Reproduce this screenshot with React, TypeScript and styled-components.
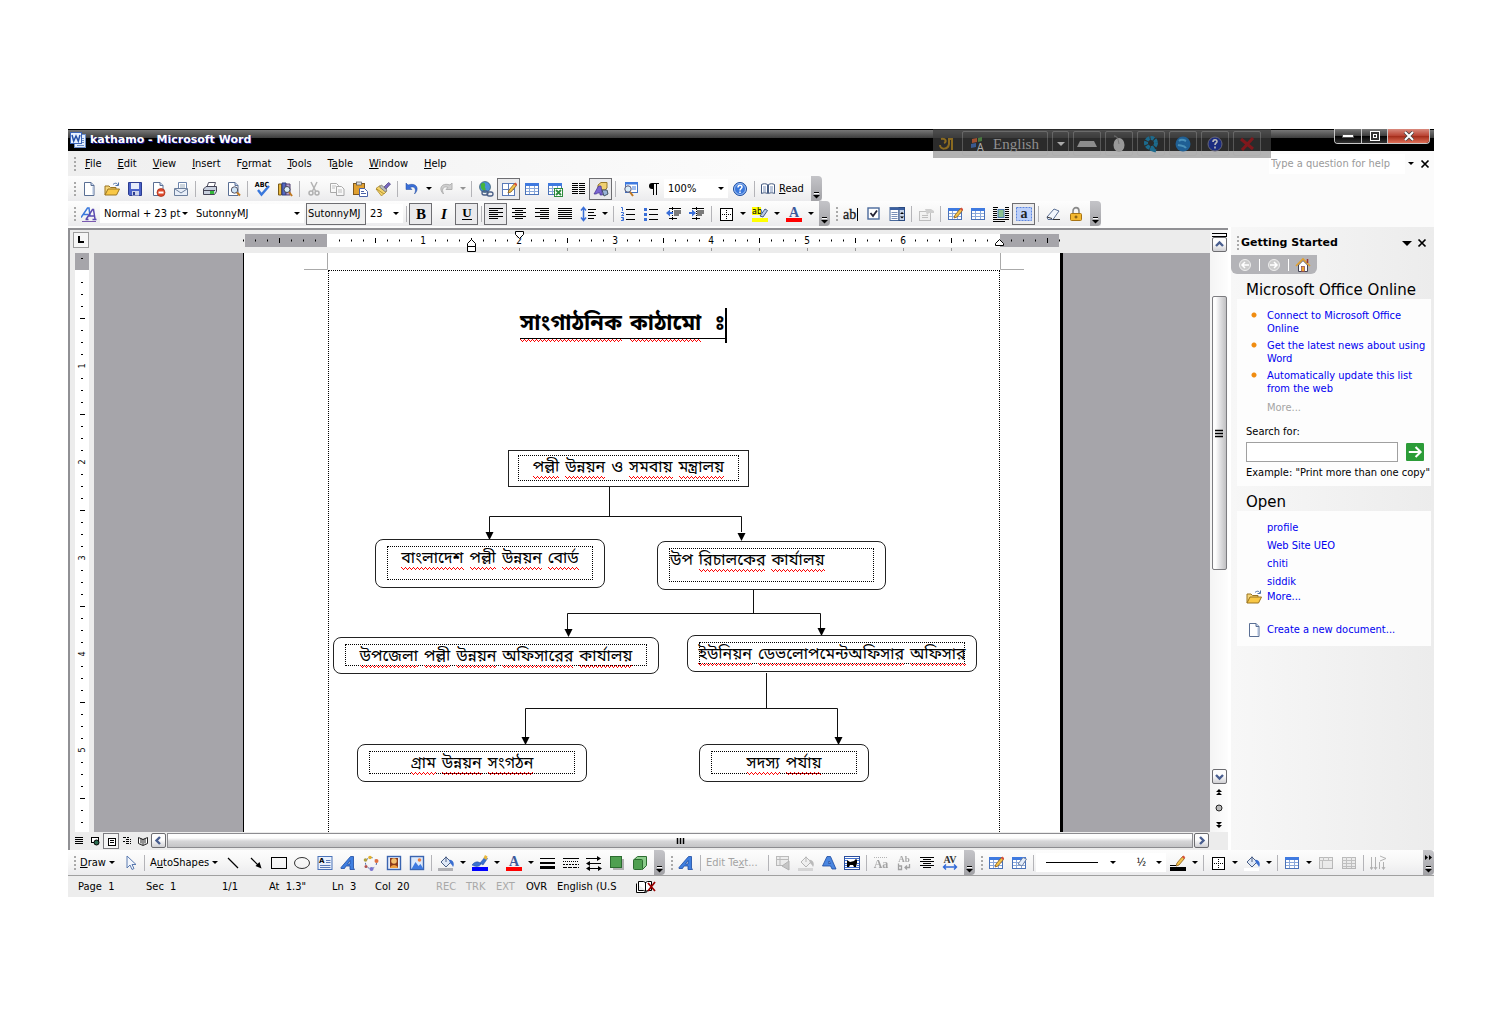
import React from "react";
import styled, { createGlobalStyle, css } from "styled-components";

const ui = `"DejaVu Sans Condensed", "DejaVu Sans", "Liberation Sans", sans-serif`;
const wide = `"DejaVu Sans", "Liberation Sans", sans-serif`;
const bangla = `"Noto Sans Bengali", "Noto Serif Bengali", "Lohit Bengali", "FreeSerif", "FreeSans", serif`;

const GlobalStyle = createGlobalStyle`
  * { box-sizing: border-box; }
  body { margin: 0; background: #fff; font: 11px/14px ${ui}; color: #000; }
  button, input, select { font: inherit; color: inherit; margin: 0; padding: 0; border: 0; background: none; }
  svg { display: block; flex: none; }
`;

/* ---------- frame ---------- */

const Page = styled.div`
  min-height: 100vh;
  padding: 129px 66px 127px 68px;
  display: flex;
`;
const Window = styled.div`
  flex: 1;
  min-width: 0;
  display: flex;
  flex-direction: column;
  background: #fbfbfb;
`;
const TitleBar = styled.header`
  position: relative;
  height: 22px;
  display: flex;
  align-items: center;
  padding-left: 2px;
  gap: 4px;
  background: linear-gradient(#000 0, #000 1px, #777 1px, #3c3c3c 9px, #000 9px);
  color: #fff;
`;
const Title = styled.h1`
  margin: 0;
  font: bold 11px/14px ${wide};
  text-shadow: 1px 1px 0 #1c1c9c;
`;
const WinButtons = styled.div`
  align-self: flex-start;
  display: flex;
  margin: 0 4px 0 auto;
  border: 1px solid #c8c8c8;
  border-top: 0;
  border-radius: 0 0 4px 4px;
  overflow: hidden;
`;
const WinButton = styled.button<{ $close?: boolean }>`
  width: ${(p) => (p.$close ? 42 : 26)}px;
  height: 14px;
  display: grid;
  place-items: center;
  background: ${(p) =>
    p.$close ? "linear-gradient(#d98a7e, #b8402f 50%, #a12a18 50%, #e07058)" : "linear-gradient(#777, #3c3c3c 50%, #000 50%, #333)"};
  & + & { border-left: 1px solid #c8c8c8; }
`;
const LangBar = styled.div`
  position: absolute;
  z-index: 2;
  top: 0;
  right: 163px;
  width: 338px;
  height: 29px;
  padding: 2px 3px;
  display: flex;
  align-items: stretch;
  gap: 4px;
  background: rgba(120, 120, 120, 0.55);
  box-shadow: inset 0 22px 0 rgba(0, 0, 0, 0.35);
`;
const LangButton = styled.button<{ $w: number; $bare?: boolean }>`
  width: ${(p) => p.$w}px;
  display: flex;
  align-items: center;
  justify-content: center;
  gap: 6px;
  border: 1px solid ${(p) => (p.$bare ? "transparent" : "rgba(170,170,170,0.35)")};
  border-radius: 2px;
  color: #8f8f8f;
  font: 15px/16px "Liberation Serif", serif;
`;

/* ---------- menu and tool bars ---------- */

const MenuBar = styled.nav`
  height: 25px;
  display: flex;
  align-items: center;
  background: linear-gradient(90deg, #efefef, #fbfbfb 50%);
`;
const MenuItem = styled.button`
  padding: 0 8px;
  height: 20px;
  white-space: nowrap;
`;
const HelpBox = styled.input`
  margin-left: auto;
  width: 136px;
  height: 20px;
  padding-left: 2px;
  background: #fff;
  &::placeholder { color: #9a9a9a; opacity: 1; }
`;
const MenuClose = styled.button`
  width: 18px;
  height: 20px;
  display: grid;
  place-items: center;
`;
const BarRow = styled.div<{ $h: number; $line?: boolean }>`
  display: flex;
  height: ${(p) => p.$h}px;
  background: #fbfbfb;
  border-bottom: ${(p) => (p.$line ? "1px solid #a0a0a0" : 0)};
`;
const Bar = styled.div<{ $fill?: boolean }>`
  display: flex;
  align-items: center;
  height: 25px;
  flex: ${(p) => (p.$fill ? "1" : "none")};
  background: linear-gradient(#fdfdfd, #f6f6f6 50%, #ebebed);
`;
const Grip = styled.span`
  flex: none;
  width: 9px;
  height: 14px;
  background: radial-gradient(circle at 1px 1px, #a9a9a9 1px, transparent 1px) 6px 0 / 3px 4px repeat-y;
`;
const Tool = styled.button<{ $on?: boolean; $off?: boolean }>`
  flex: none;
  width: 23px;
  height: 22px;
  display: grid;
  place-items: center;
  ${(p) => p.$on && css`border: 1px solid #6e6e72; background: #eaeaec;`}
  ${(p) => p.$off && css`filter: grayscale(1); opacity: 0.42;`}
`;
const WideTool = styled.button<{ $w: number; $off?: boolean }>`
  flex: none;
  width: ${(p) => p.$w}px;
  height: 22px;
  display: flex;
  align-items: center;
  gap: 3px;
  padding-left: 3px;
  white-space: nowrap;
  color: ${(p) => (p.$off ? "#a3a3a3" : "#000")};
`;
const Drop = styled.button<{ $off?: boolean }>`
  flex: none;
  width: 11px;
  height: 22px;
  display: grid;
  place-items: center;
  opacity: ${(p) => (p.$off ? 0.4 : 1)};
`;
const Sep = styled.span`
  flex: none;
  width: 6px;
  height: 16px;
  background: linear-gradient(#b4b4b8, #b4b4b8) 3px 0 / 1px 100% no-repeat;
`;
const Cap = styled.button<{ $end?: boolean }>`
  flex: none;
  width: 11px;
  height: 25px;
  margin-left: ${(p) => (p.$end ? "auto" : "3px")};
  border-radius: 0 4px 4px 0;
  display: flex;
  flex-direction: column;
  justify-content: ${(p) => (p.$end ? "space-between" : "flex-end")};
  align-items: center;
  padding: 5px 0 2px;
  background: linear-gradient(#c4c4c8, #a2a2a6);
`;
const ComboBox = styled.label<{ $w: number }>`
  flex: none;
  width: ${(p) => p.$w}px;
  height: 19px;
  display: flex;
  align-items: center;
  padding: 0 4px;
  background: #fff;
`;
const Select = styled.select`
  appearance: none;
  flex: 1;
  min-width: 0;
  outline: 0;
`;
const Tip = styled.output`
  flex: none;
  width: 60px;
  height: 22px;
  margin-left: 2px;
  border: 1px solid #6e6e72;
  background: #f0f0f0;
  padding-left: 1px;
  line-height: 20px;
  white-space: nowrap;
`;

/* ---------- document ---------- */

const Main = styled.main`
  flex: 1;
  display: flex;
  min-height: 0;
`;
const DocView = styled.section`
  flex: 1;
  min-width: 0;
  display: flex;
  flex-direction: column;
  margin-top: 1px;
  border: solid #909094;
  border-width: 2px 0 0 2px;
  background: #ececec;
`;
const DocRow = styled.div`
  flex: 1;
  min-height: 0;
  display: flex;
`;
const DocColumn = styled.div`
  flex: 1;
  min-width: 0;
  display: flex;
  flex-direction: column;
`;
const RulerRow = styled.div`
  flex: none;
  height: 23px;
  display: flex;
`;
const TabBox = styled.button`
  flex: none;
  margin: 2px 5px 0 3px;
  width: 16px;
  height: 16px;
  border: 1px solid #9c9c9c;
  background: #f6f6f6;
  display: grid;
  place-items: center;
`;
const RulerTrack = styled.div`
  flex: 1;
  min-width: 0;
  display: flex;
  justify-content: center;
`;
const SheetRow = styled.div`
  flex: 1;
  min-height: 0;
  display: flex;
`;
const SideRuler = styled.div`
  flex: none;
  width: 24px;
  overflow: hidden;
  contain: size;
  background: linear-gradient(#fff, #fff) 5px 0 / 14px 100% no-repeat;
`;
const Canvas = styled.div`
  flex: 1;
  min-width: 0;
  display: flex;
  justify-content: center;
  overflow: hidden;
  background: #a6a5aa;
`;
const Sheet = styled.article`
  position: relative;
  flex: none;
  width: 820px;
  margin-left: 2px;
  background: #fff;
  border-left: 1px solid #000;
  border-right: 3px solid #000;
`;
const TextFrame = styled.div`
  position: absolute;
  inset: 17px 60px 0 84px;
  border: 1px dotted #000;
  border-bottom: 0;
`;
/* red zigzag under misspelled words: three 1px rows of dots */
const squiggle = css`
  background:
    linear-gradient(90deg, #f00 1px, transparent 1px) 0 calc(100% - 2px) / 4px 1px repeat-x,
    linear-gradient(90deg, #f00 1px, transparent 1px) 1px calc(100% - 1px) / 2px 1px repeat-x,
    linear-gradient(90deg, #f00 1px, transparent 1px) 2px 100% / 4px 1px repeat-x;
`;
const Heading = styled.h2`
  position: absolute;
  left: 276px;
  top: 55px;
  margin: 0;
  height: 35px;
  display: flex;
  gap: 8px;
  border-right: 2px solid #000;
  background: linear-gradient(#000, #000) 0 30px / 100% 1px no-repeat;
  font: bold 22px/34px ${bangla};
  white-space: nowrap;
`;
const HeadWord = styled.span<{ $ok?: boolean }>`
  height: 34px;
  ${(p) => !p.$ok && squiggle}
`;
const Node = styled.div<{ $x: number; $y: number; $w: number; $h: number; $square?: boolean }>`
  position: absolute;
  left: ${(p) => p.$x - 244}px;
  top: ${(p) => p.$y - 253}px;
  width: ${(p) => p.$w}px;
  height: ${(p) => p.$h}px;
  padding: ${(p) => (p.$square ? "4px 9px 5px" : "6px 11px 7px")};
  border: 1px solid #222;
  border-radius: ${(p) => (p.$square ? 0 : 8)}px;
  display: flex;
`;
const NodeText = styled.p<{ $left?: boolean }>`
  flex: 1;
  min-width: 0;
  margin: 0;
  border: 1px dotted #000;
  display: flex;
  align-items: flex-start;
  justify-content: ${(p) => (p.$left ? "flex-start" : "center")};
  gap: 6px;
  font: 16px/24px ${bangla};
  white-space: nowrap;
`;
const Word = styled.span<{ $ok?: boolean }>`
  height: 23px;
  ${(p) => !p.$ok && squiggle}
`;
const Links = styled.svg`
  position: absolute;
  left: 0;
  top: 0;
`;

/* ---------- scroll bars ---------- */

const VScroll = styled.div`
  flex: none;
  width: 18px;
  display: flex;
  flex-direction: column;
  align-items: center;
  padding-top: 3px;
  background: linear-gradient(90deg, #f4f4f4, #fdfdfd);
`;
const SplitBar = styled.span`
  flex: none;
  width: 15px;
  height: 4px;
  border: solid #000;
  border-width: 1px 1px 1px 0;
`;
const ScrollButton = styled.button`
  flex: none;
  width: 15px;
  height: 15px;
  display: grid;
  place-items: center;
  border: 1px solid #6c6c70;
  border-radius: 2px;
  background: linear-gradient(#fdfdfd 45%, #cfcfd3);
`;
const VTrack = styled.div`
  flex: 1;
  width: 15px;
  padding-top: 44px;
`;
const VThumb = styled.div`
  height: 58%;
  display: grid;
  place-items: center;
  border: 1px solid #7c7c80;
  border-radius: 2px;
  background: linear-gradient(90deg, #fdfdfd 20%, #e4e4e6 50%, #c0c0c2);
`;
const Browse = styled.button`
  flex: none;
  width: 15px;
  height: 16px;
  display: grid;
  place-items: center;
`;
const BottomRow = styled.div`
  flex: none;
  height: 18px;
  display: flex;
  align-items: center;
  padding: 0 19px 1px 1px;
`;
const ViewButton = styled.button<{ $on?: boolean }>`
  flex: none;
  width: 16px;
  height: 16px;
  display: grid;
  place-items: center;
  ${(p) => p.$on && css`border: 1px solid #7c7c80; background: #f4f4f4;`}
`;
const HThumb = styled.div`
  flex: 1;
  height: 15px;
  margin: 0 1px;
  display: grid;
  place-items: center;
  border: 1px solid #8c8c90;
  background: linear-gradient(#fdfdfd 30%, #d6d6d8 55%, #c4c4c6);
`;

/* ---------- task pane ---------- */

const Pane = styled.aside`
  flex: none;
  width: 206px;
  display: flex;
  flex-direction: column;
  padding: 4px 3px 0 3px;
  background: linear-gradient(90deg, #fff 3px, #f7f7f7 3px, #ececec);
`;
const PaneHead = styled.div`
  height: 24px;
  display: flex;
  align-items: center;
  gap: 1px;
  font: bold 11px/14px ${wide};
`;
const PaneTitle = styled.h2`
  margin: 0 auto 0 0;
  font: inherit;
`;
const PaneNav = styled.div`
  align-self: flex-start;
  display: flex;
  align-items: center;
  width: 86px;
  height: 19px;
  padding: 0 3px;
  justify-content: space-between;
  background: #b4b4b8;
  border-radius: 0 0 6px 6px;
`;
const NavButton = styled.button`
  width: 22px;
  height: 19px;
  display: grid;
  place-items: center;
`;
const NavSep = styled.span`
  width: 1px;
  height: 12px;
  background: #fff;
`;
const PaneSection = styled.section`
  margin: 0 0 0 6px;
`;
const SectionTitle = styled.h3`
  margin: 0;
  height: 25px;
  padding: 7px 0 0 9px;
  font: 15px/18px ${wide};
  white-space: nowrap;
`;
const SectionBody = styled.div<{ $h: number }>`
  min-height: ${(p) => p.$h}px;
  padding: 10px 0 0 9px;
  background: #fdfdfd;
`;
const LinkList = styled.ul`
  list-style: none;
  margin: 0;
  padding: 0 0 0 21px;
  display: flex;
  flex-direction: column;
  gap: 4px;
`;
const NewsList = styled(LinkList)`
  padding-left: 5px;
  line-height: 13px;
  li {
    padding-left: 16px;
    background: radial-gradient(circle at 3px 3px, #f08c10 2px, transparent 3px) 0 3px / 7px 7px no-repeat;
  }
`;
const PaneLink = styled.a`
  color: #0000f0;
  text-decoration: none;
  white-space: nowrap;
`;
const MoreOff = styled.p`
  margin: 6px 0 11px 21px;
  line-height: 13px;
  color: #a4a4a4;
`;
const SearchLabel = styled.label`
  display: block;
  height: 17px;
`;
const SearchRow = styled.div`
  display: flex;
  align-items: center;
  gap: 8px;
  height: 20px;
  padding-right: 7px;
`;
const SearchInput = styled.input`
  flex: 1;
  min-width: 0;
  height: 20px;
  border: 1px solid #a0a0a0;
  background: #fff;
`;
const Example = styled.p`
  margin: 4px 0 0;
  white-space: nowrap;
`;
const IconLink = styled.div<{ $gap?: number }>`
  display: flex;
  align-items: center;
  gap: 5px;
  height: 16px;
  margin-top: ${(p) => p.$gap || 0}px;
`;

const StatusBar = styled.footer`
  height: 21px;
  display: flex;
  align-items: center;
  padding: 1px 0 0 10px;
  background: #ededed;
`;
const StatusCell = styled.span<{ $w: number; $off?: boolean }>`
  flex: none;
  width: ${(p) => p.$w}px;
  white-space: pre;
  color: ${(p) => (p.$off ? "#a8a8a8" : "#000")};
`;

/* ---------- drawings ---------- */

const grid = (
  <>
    <rect x="1.5" y="2.5" width="13" height="11" fill="#fff" stroke="#4a72b8" />
    <rect x="1" y="2" width="14" height="3" fill="#3f7ae0" />
    <path d="M2 7.5h12M2 10.5h12M5.5 5v8M10.5 5v8" stroke="#8aa8da" fill="none" />
  </>
);
const pencil = (
  <>
    <path d="M7 12l1-3 5.5-6.500 2 2L10 11z" fill="#f2c34a" stroke="#8a5a1c" strokeWidth=".8" />
    <path d="M13 3l1.500-1.500 1.800 1.800L14.800 5z" fill="#d8503c" />
  </>
);
const paper = <path d="M3.500 1.500h6.500l3 3v10h-9.500z" fill="#fff" stroke="#5a6f94" />;
const fold = <path d="M10 1.500v3h3" fill="#c4d4ee" stroke="#5a6f94" />;
const letterA = (c: string) => (
  <>
    <text x="8" y="11" textAnchor="middle" fontFamily="Liberation Serif, serif" fontWeight="bold" fontSize="14" fill="#3c5a9c">A</text>
    <rect x="0" y="12" width="16" height="4" fill={c} />
  </>
);
const bucket = (c: string) => (
  <>
    <path d="M3 7l5-5 5 5-5 5z" fill="#dfe8f6" stroke="#4a5f86" />
    <path d="M8 7V1.500" stroke="#4a5f86" fill="none" />
    <path d="M11 5c4-1 6 4 4 7-1-2-1-2-3-4z" fill="#3a6ed0" />
    <rect x="0" y="13" width="15" height="3" fill={c} />
  </>
);
const wordArt = <path d="M1 12.500L10.500 1.500h3V13l1 1.500H10V11H6l-1.500 2.500H1zM7.500 9H10V5.500z" fill="#3f7fe0" stroke="#1c4aa0" strokeWidth=".8" fillRule="evenodd" />;
const openFolder = (
  <>
    <path d="M1 14V5h4l1.500 1.500H12V9" fill="#f6d67a" stroke="#9a7420" />
    <path d="M1 14l3-6h11.500l-3 6z" fill="#f9c846" stroke="#9a7420" />
    <path d="M9 3.500c2-2 4-1.500 5 .5M14.500 1.500v3h-3" stroke="#4a6fa8" fill="none" />
  </>
);
const aText = (t: string, size: number, y: number, c = "#333", f = "Liberation Serif, serif") => (
  <text x="8" y={y} textAnchor="middle" fontFamily={f} fontWeight="bold" fontSize={size} fill={c}>{t}</text>
);

const icons: Record<string, React.ReactNode> = {
  new: <>{paper}{fold}<path d="M12 5.500v8" stroke="#a8bcdc" /></>,
  open: openFolder,
  save: <><path d="M1.500 1.500h13v13h-12l-1-1z" fill="#4a62c8" stroke="#2c3c90" /><rect x="4" y="2" width="8" height="6" fill="#e6ecfa" /><rect x="5" y="10" width="7" height="4.500" fill="#cdd4ea" /><rect x="6" y="11" width="2" height="3" fill="#2c3c90" /></>,
  permission: <>{paper}{fold}<circle cx="11" cy="11.500" r="4" fill="#e04a2c" stroke="#a02a14" strokeWidth=".7" /><rect x="8.500" y="10.500" width="5" height="2" fill="#fff" /></>,
  mail: <><path d="M5.500 1.500h8v9h-8z" fill="#fff" stroke="#6c84ac" /><path d="M7 4h5M7 6h5" stroke="#9ab" /><path d="M1.500 7.500h13v7h-13z" fill="#e8eef8" stroke="#6c7f9c" /><path d="M2 8l6 4 6-4" stroke="#6c7f9c" fill="none" /></>,
  print: <><path d="M5 6l1.500-4.500h7L12 6z" fill="#fff" stroke="#556" /><path d="M1.500 8l2.500-2.500h10.500v5l-2 3h-11z" fill="#c8d0de" stroke="#445" /><path d="M2 9.500h11" stroke="#445" /><rect x="8" y="10" width="4" height="3" fill="#35b83a" /></>,
  preview: <>{paper}{fold}<circle cx="9.500" cy="9" r="3.200" fill="#cfe4f6" stroke="#556" /><path d="M12 11.500l3 3" stroke="#c07820" strokeWidth="2" /></>,
  spell: <>{aText("ABC", 7, 6, "#000", "DejaVu Sans Condensed, sans-serif")}<path d="M4 9l3.500 4.500L15 5" stroke="#3a78dc" strokeWidth="2.400" fill="none" /></>,
  research: <><path d="M1.500 3h3v11h-3z" fill="#e8b83c" stroke="#7a5a18" /><path d="M5 2h4v12H5z" fill="#5468c0" stroke="#2c3c80" /><path d="M9 3h4v11H9z" fill="#b8a0d0" stroke="#504070" /><circle cx="10" cy="8.500" r="3" fill="#d8ecf8" stroke="#445" /><path d="M12 11l3 4" stroke="#c07820" strokeWidth="2" /></>,
  cut: <><path d="M5 1l4.500 9M11 1L6.500 10" stroke="#555" strokeWidth="1.500" fill="none" /><circle cx="5" cy="12" r="2" fill="none" stroke="#555" strokeWidth="1.500" /><circle cx="11" cy="12" r="2" fill="none" stroke="#555" strokeWidth="1.500" /></>,
  copy: <><path d="M1.500 2.500h6l2 2v7h-8z" fill="#fff" stroke="#444" /><path d="M7.500 5.500h5l2.500 2.500v6.500H7.500z" fill="#fff" stroke="#444" /><path d="M9 9h4M9 11h4M3 5h4M3 7h3" stroke="#777" /></>,
  paste: <><rect x="1.500" y="2.500" width="11" height="11" fill="#e0a030" stroke="#80581c" /><rect x="4.500" y="1" width="5" height="3" fill="#ddd" stroke="#555" strokeWidth=".7" /><path d="M7.500 7.500h5l3 3v5h-8z" fill="#fff" stroke="#4a62a8" /><path d="M9 10.500h3M9 12.500h5" stroke="#4a62a8" /></>,
  painter: <><path d="M9 6l4.500-4.500 2 1.500L11 8z" fill="#7a68c0" stroke="#443a78" strokeWidth=".7" /><path d="M3 8l6 4.500L6.500 15 1 8z" fill="#f4d46a" stroke="#a07c20" strokeWidth=".7" /><path d="M5 4.500l6.500 6L9 13 1 7.500z" fill="#f4d46a" stroke="#a07c20" strokeWidth=".7" /><path d="M6.500 4l5.500 5-1.500 2-6-5z" fill="#bbb" stroke="#666" strokeWidth=".7" /></>,
  undo: <path d="M2 2v6.500h6L6 6.500c4-2 7 1 4.500 6.500C16 8 12.500 1 4 4z" fill="#3a6fd8" stroke="#234a9c" strokeWidth=".5" />,
  redo: <path d="M14 2v6.500H8l2-2C6 4.500 3 7.500 5.500 13 0 8 3.500 1 12 4z" fill="#999" stroke="#555" />,
  hyperlink: <><circle cx="7" cy="6" r="5.500" fill="#4a90d8" stroke="#245" strokeWidth=".6" /><path d="M3 3c3-3 5 0 4 2s2 2 0 5c-3 0-5-4-4-7z" fill="#46b43c" /><rect x="4" y="10" width="6" height="4" rx="2" fill="none" stroke="#4a5f86" strokeWidth="1.300" /><rect x="9" y="11" width="6" height="4" rx="2" fill="none" stroke="#4a5f86" strokeWidth="1.300" /></>,
  tablesBorders: <><rect x="1.500" y="2.500" width="12" height="12" fill="#fff" stroke="#5a7ab8" /><path d="M7.500 2v12M2 8.500h12" stroke="#5a7ab8" />{pencil}</>,
  table: grid,
  tablePen: <>{grid}{pencil}</>,
  tableErase: <>{grid}<path d="M7 9l5-6.500 3.500 1.500-4.500 7z" fill="#e4ecf8" stroke="#6a7fa4" /></>,
  excel: <>{grid}<rect x="7.500" y="7.500" width="8" height="8" fill="#fff" stroke="#2c8a3c" /><path d="M9 9l5 5M14 9l-5 5" stroke="#2c8a3c" strokeWidth="1.800" /></>,
  columns: <path d="M2 2.500h6M9 2.500h6M2 4.500h6M9 4.500h6M2 6.500h6M9 6.500h6M2 8.500h6M9 8.500h6M2 10.500h6M9 10.500h6M2 12.500h6M9 12.500h6" stroke="#000" />,
  drawing: <><path d="M5 4l3-2.500h6V7l-2 2H5z" fill="#f0d070" stroke="#9a7a28" /><path d="M9 9h5l1 4-4 2z" fill="#9ab4d8" stroke="#456" /><path d="M1 13L5.500 5h2.500L9.500 14H7v-2H4.500L3.500 13z" fill="#7a64d0" stroke="#43348c" strokeWidth=".7" /></>,
  docmap: <><rect x="3.500" y="1.500" width="12" height="10" fill="#fff" stroke="#3f6fc0" /><rect x="3" y="1" width="13" height="2.500" fill="#3f7ae0" /><path d="M10 6h4M10 8h4" stroke="#3f7ae0" /><circle cx="6" cy="8" r="3.200" fill="#d8ecf8" stroke="#557" /><path d="M8 11l3 4" stroke="#c07820" strokeWidth="2" /></>,
  pilcrow: <><path d="M9 2H7a3 3 0 000 6h2z" /><path d="M7 2.500h7M8.500 2v12M11.500 2v12" stroke="#000" fill="none" /></>,
  help: <><circle cx="8" cy="8" r="6.500" fill="#3a78dc" stroke="#1d4d9e" /><circle cx="8" cy="8" r="5.500" fill="none" stroke="#cfe0fa" strokeWidth=".7" /><path d="M6 6.500c0-3 4-3 4-.5 0 1.500-2 1.500-2 3.500M8 10.500v1.500" stroke="#fff" strokeWidth="1.500" fill="none" /></>,
  read: <><path d="M1.500 3.500c2-1 4-1 6 0v9c-2-1-4-1-6 0z" fill="#fff" stroke="#445a80" /><path d="M14.500 3.500c-2-1-4-1-6 0v9c2-1 4-1 6 0z" fill="#fff" stroke="#445a80" /><path d="M3 6h3M3 8h3M3 10h3M10 6h3M10 8h3M10 10h3" stroke="#7a90b8" /></>,
  styles: <><path d="M0 11.500L6.500 2h1.500l1 8M2.500 8.500h5" stroke="#3a78dc" strokeWidth="1.500" fill="none" /><path d="M5 13.500L11.500 3.500h1l1.500 9.500M7 10h6M4.500 13.500h3M11.500 13.500h4" stroke="#5a4ab0" strokeWidth="1.500" fill="none" /><path d="M1 15.500h14" stroke="#7a5ab0" /></>,
  bold: aText("B", 15, 13, "#000"),
  italic: <text x="8" y="13" textAnchor="middle" fontFamily="Liberation Serif, serif" fontStyle="italic" fontWeight="bold" fontSize="15">I</text>,
  underline: <>{aText("U", 13, 11, "#000")}<path d="M3 13.500h10" stroke="#000" /></>,
  left: <path d="M1 2.500h14M1 4.500h9M1 6.500h14M1 8.500h9M1 10.500h14M1 12.500h9" stroke="#000" />,
  center: <path d="M1 2.500h14M4 4.500h8M1 6.500h14M4 8.500h8M1 10.500h14M4 12.500h8" stroke="#000" />,
  right: <path d="M1 2.500h14M6 4.500h9M1 6.500h14M6 8.500h9M1 10.500h14M6 12.500h9" stroke="#000" />,
  justify: <path d="M1 2.500h14M1 4.500h14M1 6.500h14M1 8.500h14M1 10.500h14M1 12.500h14" stroke="#000" />,
  spacing: <><path d="M3.500 2v12M1 4.500L3.500 1.500 6 4.500M1 11.500l2.500 3 2.500-3" stroke="#3a6fd8" strokeWidth="1.500" fill="none" /><path d="M8 3.500h8M8 6.500h6M8 9.500h8M8 12.500h6" stroke="#000" /></>,
  numbering: <><path d="M1 1.500h1.500v3.500M1 6.500h2.500v1.500L1.500 9.500h2.500M1 11.500h2.500v3H1M2 13h1.500" stroke="#3a6fd8" fill="none" /><path d="M6 3.500h9M6 8.500h9M6 13.500h9" stroke="#000" /></>,
  bullets: <><path d="M1 2h3v3H1zM1 7h3v3H1zM1 12h3v3H1z" fill="#3a6fd8" /><path d="M6 3.500h9M6 8.500h9M6 13.500h9" stroke="#000" /></>,
  outdent: <><path d="M3 2.500h12M8 5h7M8 7h7M8 9h5M3 12.500h8" stroke="#000" strokeWidth="1.200" /><path d="M6.500 1v14" stroke="#000" strokeDasharray="1 1" /><path d="M7 6H4V3.500L0 7l4 3.500V8h3z" fill="#3a6fd8" /></>,
  indent: <><path d="M3 2.500h12M8 5h7M8 7h7M8 9h5M3 12.500h8" stroke="#000" strokeWidth="1.200" /><path d="M7.500 1v14" stroke="#000" strokeDasharray="1 1" /><path d="M0 6h3V3.500L7 7l-4 3.500V8H0z" fill="#3a6fd8" /></>,
  border: <><rect x="2.500" y="2.500" width="12" height="12" fill="#fff" stroke="#000" /><path d="M8.500 4v10M4 8.500h10" stroke="#000" strokeDasharray="1 1" /></>,
  highlight: <><rect x="0" y="1" width="9" height="8" fill="#ff0" /><text x="0" y="8" fontFamily="DejaVu Sans, sans-serif" fontSize="8">ab</text><path d="M8 10l5-7 2.500 1.500L11 11z" fill="#b8c8e8" stroke="#445a80" /><rect x="0" y="12" width="16" height="4" fill="#ff0" /></>,
  fontColor: letterA("#f00"),
  abField: <><text x="0" y="13" fontFamily="Liberation Serif, serif" fontSize="14" fill="#222" stroke="#222" strokeWidth=".3">ab</text><path d="M14.500 2v13" stroke="#000" /></>,
  check: <><rect x="2" y="2" width="11" height="11" fill="#fff" stroke="#4a6a9c" strokeWidth="1.400" /><path d="M4.500 7l2.500 3 4-5.500" stroke="#223" strokeWidth="1.800" fill="none" /></>,
  list: <><rect x="1" y="1.500" width="9" height="13" fill="#fff" stroke="#4a6a9c" /><path d="M2.500 6.500h6M2.500 8.500h6M2.500 10.500h6M2.500 12.500h6" stroke="#7a90b8" /><rect x="10" y="1.500" width="5.500" height="13" fill="#c8d4e8" stroke="#2a4a80" /><path d="M1 3h14" stroke="#3a5fa0" strokeWidth="2" /><path d="M11 8h4l-2-2zM11 10.500h4l-2 2z" /></>,
  props: <><rect x="1.500" y="5.500" width="11" height="9" fill="#eee" stroke="#777" /><path d="M4 9.500h6M4 11.500h6" stroke="#777" /><path d="M7 3h6l3 2v2h-5l-2 2z" fill="#999" /></>,
  frame: <><path d="M0 1.500h5M12 1.500h4M0 3.500h4M12 3.500h4M0 5.500h4M12 5.500h4M0 7.500h4M12 7.500h4M0 9.500h4M12 9.500h4M0 11.500h4M12 11.500h4M0 13.500h16M0 15.500h12" stroke="#000" /><rect x="5" y="3.500" width="6" height="8" fill="#8ac090" stroke="#4a7ab0" /></>,
  shade: <><rect x="0.500" y="1.500" width="15" height="13" fill="#bcd0fa" stroke="#5a84e0" strokeDasharray="2 1" />{aText("a", 14, 12, "#222")}</>,
  eraser: <><path d="M2 11l7-8 5 2-6 8.500H3z" fill="#f2f6fc" stroke="#5a6f94" /><path d="M2 11l5 1.500M8 13.500h7" stroke="#333" fill="none" /></>,
  lock: <><path d="M5 8V5c0-4.500 6-4.500 6 0v3" stroke="#8a8a8a" strokeWidth="1.600" fill="none" /><rect x="2.500" y="7.500" width="11" height="7" rx="1" fill="#f4b830" stroke="#a87414" /><path d="M8 9.500v3M6.500 11h3" stroke="#6a4810" /></>,
  select: <path d="M5 1v12l3-3 2 4.500 2-1-2-4h4z" fill="#f2f6fc" stroke="#5a7ab0" />,
  line: <path d="M3 3l10 10" stroke="#000" strokeWidth="1.200" />,
  arrow: <><path d="M3 3l8 8" stroke="#000" strokeWidth="1.200" /><path d="M13.500 13.500L7.500 11l4-4z" /></>,
  rect: <rect x="0.500" y="2.500" width="15" height="11" fill="none" stroke="#000" />,
  oval: <ellipse cx="8" cy="8" rx="7.500" ry="5.500" fill="none" stroke="#333" />,
  textBox: <><rect x="1" y="1.500" width="14" height="13" fill="#eaf1fc" stroke="#4a72b8" /><text x="2" y="8" fontFamily="DejaVu Sans, sans-serif" fontSize="7" fontWeight="bold">A</text><path d="M9 5.500h4.500M9 7.500h4.500M3 10.500h10.500M3 12.500h10.500" stroke="#5a7ab8" /></>,
  wordArt,
  diagram: <><circle cx="8" cy="8" r="5.500" fill="none" stroke="#4a6aa8" strokeDasharray="2 3" /><circle cx="7" cy="2.500" r="1.800" fill="#e0b030" /><circle cx="2.500" cy="5" r="1.800" fill="#b0a040" /><circle cx="13.500" cy="6" r="2" fill="#e07040" /><circle cx="8.500" cy="14" r="2" fill="#7a74d0" /><circle cx="3" cy="11.500" r="1.500" fill="#b05050" /></>,
  clip: <><rect x="1.500" y="1.500" width="13" height="13" fill="#e8eefa" stroke="#3a64b0" strokeWidth="1.400" /><rect x="4" y="3" width="8" height="10" fill="#8a3a1c" /><circle cx="8" cy="6" r="2.800" fill="#f4c070" /><path d="M4 13c1-4 7-4 8 0z" fill="#f0a040" /></>,
  picture: <><rect x="1.500" y="1.500" width="13" height="13" fill="#dce9fb" stroke="#3a64b0" strokeWidth="1.400" /><circle cx="10.500" cy="5" r="1.800" fill="#f08040" /><path d="M2.500 14l4-7 3 4 2-2 3 5z" fill="#3f7ae0" /></>,
  fill: bucket("#b0b0b4"),
  fillPlain: bucket("#fff"),
  lineColor: <><path d="M0 10c3-4 7-4 9-1-1 3-6 3-9 1zM8 8l5-6 2.500 1.500L11 10z" fill="#3a70d0" stroke="#234a9c" strokeWidth=".5" /><path d="M13 0l2.500 1.500-1 3.500-3-2z" fill="#e8b83c" /><rect x="0" y="12" width="16" height="4" fill="#00f" /></>,
  penColor: <><g transform="translate(-1 -1)">{pencil}</g><path d="M0 10.500h6" stroke="#000" /><rect x="0" y="12" width="16" height="4" /></>,
  lineStyle: <><path d="M0 3.500h15" stroke="#000" /><path d="M0 8h15" stroke="#000" strokeWidth="2" /><path d="M0 12.500h15" stroke="#000" strokeWidth="3" /></>,
  dash: <><path d="M0 3.500h16" stroke="#000" /><path d="M0 6.500h16" stroke="#000" strokeDasharray="1 1" /><path d="M0 9.500h16" stroke="#000" strokeDasharray="2 1" /><path d="M0 12.500h16" stroke="#000" strokeDasharray="4 1" /></>,
  arrowStyle: <><path d="M0 3.500h14M2 8.500h13M2 13.500h12" stroke="#000" /><path d="M11 1l4 2.500L11 6zM4 6L0 8.500 4 11zM12 11l4 2.500-4 2.500zM4 11l-4 2.500L4 16z" /></>,
  shadow: <><rect x="4" y="4" width="11" height="11" fill="#b0b0b0" /><rect x="1.500" y="1.500" width="11" height="11" fill="#4fa050" stroke="#2c6c30" /></>,
  cube: <><path d="M1.500 5l4-3.500h9v9l-4 4z" fill="#8ccc8c" stroke="#2c6c30" /><rect x="1.500" y="4.500" width="9" height="10" rx="1" fill="#4fa050" stroke="#2c6c30" /></>,
  gallery: <><rect x="1.500" y="1.500" width="12" height="9" fill="#ddd" stroke="#666" /><path d="M1 4.500h12M5 2v8" stroke="#666" /><path d="M7 11l7-5v9z" fill="#888" stroke="#555" /></>,
  shape: <path d="M6 1.500h3.500L15 14h-4l-1.500-3H1.500zM7.500 8.500L8 6l1.500 2.500z" fill="#4a86e0" stroke="#1c4aa0" strokeWidth=".8" fillRule="evenodd" />,
  wrap: <><rect x="0.500" y="1.500" width="15" height="13" fill="#fff" stroke="#2c4f9c" /><path d="M1 3.500h14M1 12.500h14M1 5.500h2M13 5.500h2M1 8.500h2M13 8.500h2M1 10.500h2M13 10.500h2" stroke="#3f6fd0" /><path d="M3 5l3 2 4-1 2-2 1 1v3l-1 4h-2l-1-2H6l-1 2H3z" /></>,
  sameHeight: <>{aText("Aa", 12, 13)}<path d="M1 2.500h14" stroke="#555" strokeDasharray="1 1" /></>,
  vertical: <>{aText("Ab", 9, 7)}<path d="M2.500 8.500v6h3v-3.500h-3M13.500 9v3.500H9M11 10.500l-2 2 2 2" stroke="#333" strokeWidth="1.300" fill="none" /></>,
  av: <>{aText("AV", 10, 8, "#333")}<path d="M2 12h12M4 9.500L1.500 12 4 14.500M12 9.500l2.500 2.500-2.500 2.500" stroke="#2f68d8" strokeWidth="1.400" fill="none" /></>,
  merge: <><rect x="1.500" y="2.500" width="13" height="11" fill="#ddd" stroke="#666" /><path d="M1 5.500h13M5.500 2v4M10.500 2v4M4.500 6v8" stroke="#777" /></>,
  split: <><rect x="1.500" y="2.500" width="13" height="11" fill="#ddd" stroke="#666" /><path d="M1 5.500h13M1 8.500h13M1 11.500h13M5.500 2v11M10.500 2v11" stroke="#777" /></>,
  textDir: <><path d="M1.500 2v12M5.500 2v12M9.500 7v7M13.500 7v7M0 12l1.500 2.500L3 12M4 12l1.500 2.500L7 12M12 12l1.500 2.500 1.500-2.500" stroke="#555" fill="none" /><path d="M10 1l6 2.500L10 6" stroke="#555" fill="none" /></>,
  home: <><path d="M3.500 8v6.500h9V8L8 3.500z" fill="#fff" stroke="#445" /><path d="M1 9l7-7 7 7" stroke="#e0a030" strokeWidth="1.600" fill="none" /><rect x="6.500" y="9.500" width="3" height="5" fill="#f0a830" stroke="#845" strokeWidth=".7" /><path d="M12.500 2v4" stroke="#933" strokeWidth="1.500" /></>,
  back: <><circle cx="8" cy="8" r="5.500" fill="#ccc" stroke="#eee" /><path d="M12 8H5M8 5L5 8l3 3" stroke="#fff" strokeWidth="1.500" fill="none" /></>,
  forward: <><circle cx="8" cy="8" r="5.500" fill="#ccc" stroke="#eee" /><path d="M4 8h7M8 5l3 3-3 3" stroke="#fff" strokeWidth="1.500" fill="none" /></>,
  go: <><rect x="0" y="0" width="16" height="16" rx="1" fill="#2c9c38" /><path d="M2.500 8H13M8.500 3.500L13 8l-4.500 4.500" stroke="#fff" strokeWidth="1.800" fill="none" /></>,
  word: <><rect x="4.500" y="2.500" width="11" height="13" fill="#e4eefc" stroke="#6a8cc8" /><path d="M11 6.500h3M11 8.500h3M11 10.500h3M7 13.500h7" stroke="#6a8cc8" /><rect x="0.500" y="0.500" width="11" height="11" fill="#e8f1ff" stroke="#3a64b8" /><path d="M2 3l1.700 6L6 4l2.300 5L10 3" stroke="#2450a8" strokeWidth="1.500" fill="none" /></>,
  close: <path d="M4.500 4.500l7 7M11.500 4.500l-7 7" stroke="#000" strokeWidth="1.700" />,
  viewNormal: <path d="M4 4.500h8M4 6.500h8M4 8.500h8M4 10.500h8" stroke="#000" />,
  viewWeb: <><rect x="4.500" y="4.500" width="7" height="5" fill="#fff" stroke="#000" /><circle cx="9.500" cy="9.500" r="2.500" fill="#2c6c50" stroke="#000" /></>,
  viewPrint: <><rect x="4.500" y="4.500" width="7" height="7" fill="#fff" stroke="#000" /><path d="M6 6.500h4M6 8.500h4" stroke="#000" /></>,
  viewOutline: <path d="M4 4.500h6M7 6.500h5M4 8.500h2M7 8.500h5M7 10.500h5" stroke="#000" strokeDasharray="3 1" />,
  viewRead: <path d="M3.500 4.500L8 6.500l4.500-2v6L8 12.500l-4.500-2zM8 6v6M6 5.500v5M10 5.500v5" fill="#fff" stroke="#222" />,
};

const Icon = ({ n, s = 16 }: { n: string; s?: number }) => (
  <svg width={s} height={s} viewBox="0 0 16 16" aria-hidden="true">{icons[n]}</svg>
);
const Tri = ({ w = 6 }: { w?: number }) => (
  <svg width={w} height={w / 2} viewBox="0 0 6 3" aria-hidden="true"><path d="M0 0h6L3 3z" /></svg>
);
const Chevron = ({ r }: { r: number }) => (
  <svg width="11" height="11" viewBox="0 0 11 11" aria-hidden="true">
    <path d="M2 7l3.500-3.500L9 7" stroke="#4a5f90" strokeWidth="2.400" fill="none" transform={`rotate(${r} 5.500 5.500)`} />
  </svg>
);

/* Tool strings: "|" separator, ">" drop arrow, "+" pressed, "-" disabled */
const Tools = ({ items }: { items: string }) => (
  <>
    {items.split(" ").map((t, i) => {
      if (t === "|") return <Sep key={i} />;
      if (t === ">" || t === "->") return <Drop key={i} $off={t === "->"} aria-label="More options"><Tri /></Drop>;
      const on = t[0] === "+";
      const off = t[0] === "-";
      const n = on || off ? t.slice(1) : t;
      return <Tool key={i} $on={on} $off={off} aria-label={n}><Icon n={n} /></Tool>;
    })}
  </>
);
const EndCap = ({ end }: { end?: boolean }) => (
  <Cap $end={end} aria-label="Toolbar options">
    {end && <svg width="8" height="5" viewBox="0 0 8 5"><path d="M0 0l3 2.500L0 5zM4 0l3 2.500L4 5z" /></svg>}
    <svg width="7" height="8" viewBox="0 0 7 8"><path d="M1 1.500h5" stroke="#000" /><path d="M1 2.500h5" stroke="#fff" /><path d="M0 4h7L3.500 7.500z" /></svg>
  </Cap>
);
const Combo = ({ w, label, value }: { w: number; label: string; value: string }) => (
  <ComboBox $w={w}>
    <Select aria-label={label} defaultValue={value}><option>{value}</option></Select>
    <Tri />
  </ComboBox>
);
const Key = ({ t }: { t: string }) => {
  const [a, b, c] = t.split("_");
  return <span>{a}<u>{b}</u>{c}</span>;
};

const HRuler = () => {
  const marks: React.ReactNode[] = [];
  for (let i = -7; i <= 61; i++) {
    const x = 84 + i * 12;
    if (i === 0 || i === 56) continue;
    if (i > 0 && i < 56 && i % 8 === 0)
      marks.push(<text key={i} x={x} y="14" textAnchor="middle" fontSize="10" fontFamily="DejaVu Sans Condensed, sans-serif">{i / 8}</text>);
    else if (i % 4 === 0) marks.push(<path key={i} d={`M${x + 0.5} 8v5`} stroke="#000" />);
    else marks.push(<path key={i} d={`M${x + 0.5} 9.500v2`} stroke="#000" />);
    if (i > 15 && i < 56 && i % 4 === 0) marks.push(<path key={"t" + i} d={`M${x + 0.5} 18v3`} stroke="#999" />);
  }
  return (
    <svg width="818" height="22" viewBox="0 0 818 22" aria-label="Ruler">
      <rect x="2" y="4" width="814" height="13" fill="#a6a5aa" />
      <rect x="84" y="4" width="673" height="13" fill="#fff" />
      {marks}
      <path d="M272.500 1.500h8v3l-4 4-4-4z" fill="#fff" stroke="#000" />
      <path d="M224.500 16.500h8v5h-8zM224.500 16.500v-3l4-4 4 4v3z" fill="#fff" stroke="#000" />
      <path d="M752.500 15.500v-2l4-4 4 4v2z" fill="#fff" stroke="#000" />
    </svg>
  );
};
const VRuler = () => {
  const marks: React.ReactNode[] = [];
  for (let i = -1; i <= 46; i++) {
    const y = 17 + i * 12;
    if (i === 0) continue;
    if (i > 0 && i % 8 === 0)
      marks.push(<text key={i} x="0" y="0" transform={`translate(15 ${y}) rotate(-90)`} textAnchor="middle" fontSize="9" fontFamily="DejaVu Sans Condensed, sans-serif">{i / 8}</text>);
    else marks.push(<path key={i} d={`M${i % 4 === 0 ? 10 : 11} ${y + 0.5}h${i % 4 === 0 ? 5 : 2}`} stroke="#000" />);
  }
  return (
    <svg width="24" height="579" viewBox="0 0 24 579" aria-label="Vertical ruler">
      <rect x="5" y="0" width="14" height="17" fill="#a6a5aa" />
      {marks}
    </svg>
  );
};

type NodeData = { x: number; y: number; w: number; h: number; words: string; square?: boolean; left?: boolean };
const nodes: NodeData[] = [
  { x: 508, y: 450, w: 241, h: 37, words: "পল্লী উন্নয়ন ~ও সমবায় মন্ত্রালয়", square: true },
  { x: 375, y: 539, w: 230, h: 49, words: "বাংলাদেশ পল্লী উন্নয়ন বোর্ড" },
  { x: 657, y: 541, w: 229, h: 49, words: "~উপ রিচালকের কার্যালয়", left: true },
  { x: 333, y: 637, w: 326, h: 37, words: "উপজেলা পল্লী উন্নয়ন অফিসারের কার্যালয়" },
  { x: 687, y: 635, w: 290, h: 37, words: "ইউনিয়ন ডেভলোপমেন্টঅফিসার অফিসার" },
  { x: 357, y: 744, w: 230, h: 38, words: "গ্রাম উন্নয়ন সংগঠন" },
  { x: 699, y: 744, w: 170, h: 38, words: "সদস্য পর্যায়" },
];
const heads = [[489, 540], [741, 541], [568, 637], [821, 636], [525, 745], [838, 745]];

const menus = ["_F_ile", "_E_dit", "_V_iew", "_I_nsert", "F_o_rmat", "_T_ools", "T_a_ble", "_W_indow", "_H_elp"];
const status: [string, number, boolean?][] = [
  ["Page  1", 68], ["Sec  1", 76], ["1/1", 47], ['At  1.3"', 63], ["Ln  3", 43], ["Col  20", 61],
  ["REC", 30, true], ["TRK", 30, true], ["EXT", 30, true], ["OVR", 31], ["English (U.S", 78],
];

export default function App() {
  return (
    <Page>
      <GlobalStyle />
      <Window>
        <TitleBar>
          <Icon n="word" />
          <Title>kathamo - Microsoft Word</Title>
          <LangBar>
            <LangButton $w={22} $bare aria-label="Avro">
              <svg width="16" height="16" viewBox="0 0 16 16"><path d="M2 3c5-1 6 3 3 4M1 9c0 5 8 5 9-1V3h4M13 3v11" stroke="#8a6a20" strokeWidth="2" fill="none" /></svg>
            </LangButton>
            <LangButton $w={86}>
              <svg width="16" height="16" viewBox="0 0 16 16"><path d="M1 3l5-1v4L1 7z" fill="#a05030" /><path d="M7 2l4-1v4L7 6z" fill="#4a7a40" /><path d="M0 8l5-1v4l-5 1z" fill="#3a5a90" /><text x="6" y="15" fontSize="10" fill="#aaa" fontFamily="Liberation Sans, sans-serif">A</text></svg>
              English
            </LangButton>
            <LangButton $w={17} aria-label="Layouts"><svg width="8" height="4" viewBox="0 0 6 3"><path d="M0 0h6L3 3z" fill="#aaa" /></svg></LangButton>
            <LangButton $w={28} aria-label="Keyboard"><svg width="20" height="10" viewBox="0 0 20 10"><path d="M3 2h14l3 6H0z" fill="#8c8c8c" /></svg></LangButton>
            <LangButton $w={28} aria-label="Mouse"><svg width="16" height="18" viewBox="0 0 16 18"><ellipse cx="8" cy="10" rx="5.500" ry="7" fill="#999" /><path d="M3 1c3 0 4 2 5 8" stroke="#777" fill="none" /></svg></LangButton>
            <LangButton $w={28} aria-label="Settings"><svg width="18" height="18" viewBox="0 0 18 18"><circle cx="9" cy="8" r="5" fill="none" stroke="#1c6a8c" strokeWidth="4" strokeDasharray="3.500 1" /><path d="M8 14l6 2" stroke="#1c6a8c" strokeWidth="3" /></svg></LangButton>
            <LangButton $w={28} aria-label="Web"><svg width="18" height="18" viewBox="0 0 18 18"><circle cx="9" cy="9" r="7.500" fill="#1f5f94" /><path d="M5 6c2-2 5-1 7 0M4 10c3 1 6 0 8 3" stroke="#4a90b8" strokeWidth="2" fill="none" /></svg></LangButton>
            <LangButton $w={28} aria-label="Help"><svg width="18" height="18" viewBox="0 0 18 18"><circle cx="9" cy="9" r="7" fill="#1c2c80" stroke="#667" /><path d="M7 7c0-3 4-3 4-.5 0 1.500-2 1.500-2 3.500M9 11.500v2" stroke="#bbb" strokeWidth="1.600" fill="none" /></svg></LangButton>
            <LangButton $w={28} aria-label="Exit"><svg width="16" height="16" viewBox="0 0 16 16"><path d="M2 3l12 10M14 2L3 14" stroke="#80181c" strokeWidth="3" /></svg></LangButton>
          </LangBar>
          <WinButtons>
            <WinButton aria-label="Minimize"><svg width="12" height="5"><rect x=".5" y=".5" width="11" height="3" fill="#fff" stroke="#555" /></svg></WinButton>
            <WinButton aria-label="Restore"><svg width="12" height="12" viewBox="0 0 12 12"><rect x="1.500" y="1.500" width="9" height="9" fill="#333" stroke="#fff" /><rect x="4.500" y="4.500" width="3" height="3" fill="#333" stroke="#fff" /></svg></WinButton>
            <WinButton $close aria-label="Close"><svg width="12" height="10" viewBox="0 0 12 10"><path d="M2 1l8 8M10 1L2 9" stroke="#444" strokeWidth="3.500" /><path d="M2 1l8 8M10 1L2 9" stroke="#fff" strokeWidth="2" /></svg></WinButton>
          </WinButtons>
        </TitleBar>

        <MenuBar>
          <Grip />
          {menus.map((m) => <MenuItem key={m}><Key t={m} /></MenuItem>)}
          <HelpBox aria-label="Ask a question" placeholder="Type a question for help" />
          <Drop aria-label="Recent questions"><Tri /></Drop>
          <MenuClose aria-label="Close document"><Icon n="close" /></MenuClose>
        </MenuBar>

        <BarRow $h={25}>
          <Bar>
            <Grip />
            <Tools items="new open save permission mail | print preview | spell research | -cut -copy paste painter | undo > -redo -> | hyperlink +tablesBorders table excel columns +drawing | docmap pilcrow" />
            <Combo w={64} label="Zoom" value="100%" />
            <Tools items="help |" />
            <WideTool $w={51}><Icon n="read" /><Key t="_R_ead" /></WideTool>
            <EndCap />
          </Bar>
        </BarRow>
        <BarRow $h={26}>
          <Bar>
            <Grip />
            <Tools items="styles" />
            <Combo w={92} label="Style" value="Normal + 23 pt" />
            <Combo w={112} label="Font" value="SutonnyMJ" />
            <Tip>SutonnyMJ</Tip>
            <Combo w={37} label="Font size" value="23" />
            <Tools items="| +bold italic +underline | +left center right justify spacing > | numbering bullets outdent indent | border > highlight > fontColor >" />
            <EndCap />
          </Bar>
          <Bar>
            <Grip />
            <Tools items="abField check list | -props | tablePen table frame +shade | eraser lock" />
            <EndCap />
          </Bar>
        </BarRow>

        <Main>
          <DocView>
            <DocRow>
              <DocColumn>
                <RulerRow>
                  <TabBox aria-label="Tab type"><svg width="8" height="8"><path d="M2 0v6h5" stroke="#000" strokeWidth="2" fill="none" /></svg></TabBox>
                  <RulerTrack><HRuler /></RulerTrack>
                </RulerRow>
                <SheetRow>
                  <SideRuler><VRuler /></SideRuler>
                  <Canvas>
                    <Sheet>
                      <TextFrame />
                      <Links width="816" height="579" viewBox="244 253 816 579" aria-hidden="true">
                        <path d="M304 269.500h23.500V253M1024 269.500h-23.500V253" stroke="#aaa" fill="none" />
                        <path
                          d="M609.500 487v30M489.500 532v-15.500h252V532M753.500 590v23M567.500 630v-16.500h253V630M766.500 673v36M525.500 738v-29.500h312V738"
                          stroke="#111"
                          fill="none"
                        />
                        {heads.map(([x, y]) => <path key={x} d={`M${x - 3.5} ${y - 8}h8l-4 8z`} />)}
                      </Links>
                      <Heading>
                        <HeadWord>সাংগাঠনিক</HeadWord>
                        <HeadWord>কাঠামো</HeadWord>
                        <HeadWord $ok>{"\u00a0ঃ"}</HeadWord>
                      </Heading>
                      {nodes.map((n) => (
                        <Node key={n.words} $x={n.x} $y={n.y} $w={n.w} $h={n.h} $square={n.square}>
                          <NodeText $left={n.left}>
                            {n.words.split(" ").map((w, i) => (
                              <Word key={i} $ok={w[0] === "~"}>{w.replace("~", "")}</Word>
                            ))}
                          </NodeText>
                        </Node>
                      ))}
                    </Sheet>
                  </Canvas>
                </SheetRow>
              </DocColumn>
              <VScroll>
                <SplitBar />
                <ScrollButton aria-label="Scroll up"><Chevron r={0} /></ScrollButton>
                <VTrack>
                  <VThumb><svg width="8" height="9"><path d="M0 1.500h8M0 4.500h8M0 7.500h8" stroke="#000" strokeWidth="1.500" /></svg></VThumb>
                </VTrack>
                <ScrollButton aria-label="Scroll down"><Chevron r={180} /></ScrollButton>
                <Browse aria-label="Previous page"><svg width="6" height="7"><path d="M3 0l3 3H0zM3 3l3 3H0z" /></svg></Browse>
                <Browse aria-label="Select browse object"><svg width="8" height="8"><circle cx="4" cy="4" r="3" fill="#bbb" stroke="#222" /></svg></Browse>
                <Browse aria-label="Next page"><svg width="6" height="7"><path d="M3 4L0 1h6zM3 7L0 4h6z" /></svg></Browse>
              </VScroll>
            </DocRow>
            <BottomRow>
              {["viewNormal", "viewWeb", "viewPrint", "viewOutline", "viewRead"].map((v) => (
                <ViewButton key={v} $on={v === "viewPrint"} aria-label={v}><Icon n={v} /></ViewButton>
              ))}
              <ScrollButton aria-label="Scroll left"><Chevron r={-90} /></ScrollButton>
              <HThumb><svg width="9" height="8"><path d="M1.500 1v6M4.500 1v6M7.500 1v6" stroke="#000" strokeWidth="1.500" /></svg></HThumb>
              <ScrollButton aria-label="Scroll right"><Chevron r={90} /></ScrollButton>
            </BottomRow>
          </DocView>

          <Pane>
            <PaneHead>
              <Grip />
              <PaneTitle>Getting Started</PaneTitle>
              <Drop aria-label="Other task panes"><Tri w={10} /></Drop>
              <MenuClose aria-label="Close pane"><Icon n="close" /></MenuClose>
            </PaneHead>
            <PaneNav>
              <NavButton aria-label="Back"><Icon n="back" /></NavButton>
              <NavSep />
              <NavButton aria-label="Forward"><Icon n="forward" /></NavButton>
              <NavSep />
              <NavButton aria-label="Home"><Icon n="home" /></NavButton>
            </PaneNav>
            <PaneSection>
              <SectionTitle>Microsoft Office Online</SectionTitle>
              <SectionBody $h={187}>
                <NewsList>
                  <li><PaneLink href="#connect">Connect to Microsoft Office<br />Online</PaneLink></li>
                  <li><PaneLink href="#news">Get the latest news about using<br />Word</PaneLink></li>
                  <li><PaneLink href="#update">Automatically update this list<br />from the web</PaneLink></li>
                </NewsList>
                <MoreOff>More...</MoreOff>
                <SearchLabel htmlFor="search">Search for:</SearchLabel>
                <SearchRow>
                  <SearchInput id="search" />
                  <button aria-label="Search"><Icon n="go" s={18} /></button>
                </SearchRow>
                <Example>Example: "Print more than one copy"</Example>
              </SectionBody>
            </PaneSection>
            <PaneSection>
              <SectionTitle>Open</SectionTitle>
              <SectionBody $h={135}>
                <LinkList>
                  {["profile", "Web Site UEO", "chiti", "siddik"].map((f) => <li key={f}><PaneLink href={`#${f}`}>{f}</PaneLink></li>)}
                </LinkList>
                <IconLink><Icon n="open" /><PaneLink href="#more">More...</PaneLink></IconLink>
                <IconLink $gap={17}><Icon n="new" /><PaneLink href="#create">Create a new document...</PaneLink></IconLink>
              </SectionBody>
            </PaneSection>
          </Pane>
        </Main>

        <BarRow $h={26} $line>
          <Bar>
            <Grip />
            <WideTool $w={41}><Key t="_D_raw" /><Tri /></WideTool>
            <Tools items="select |" />
            <WideTool $w={74}><Key t="A_u_toShapes" /><Tri /></WideTool>
            <Tools items="line arrow rect oval textBox wordArt diagram clip picture | fill > lineColor > fontColor > lineStyle dash arrowStyle shadow cube" />
            <EndCap />
          </Bar>
          <Bar>
            <Grip />
            <Tools items="wordArt |" />
            <WideTool $w={62} $off><Key t="Edit Te_x_t..." /></WideTool>
            <Tools items="| -gallery -fill shape wrap | -sameHeight -vertical center av" />
            <EndCap />
          </Bar>
          <Bar $fill>
            <Grip />
            <Tools items="tablePen tableErase |" />
            <ComboBox $w={84}>
              <Select aria-label="Line style"><option aria-label="Solid"></option></Select>
              <svg width="64" height="3"><path d="M0 1.500h52" stroke="#000" /></svg>
              <Tri />
            </ComboBox>
            <Combo w={46} label="Line weight" value={"\u00a0\u00a0\u00a0\u00a0½"} />
            <Tools items="penColor > | border > fillPlain > | table > -merge -split | -textDir" />
            <EndCap end />
          </Bar>
        </BarRow>
        <StatusBar>
          {status.map(([t, w, off]) => <StatusCell key={t} $w={w} $off={off}>{t}</StatusCell>)}
          <svg width="22" height="14" viewBox="0 0 22 14" aria-label="Spelling errors">
            <path d="M3.500 1.500h5l2 1 2-1h4v9h-4l-2 1-2-1h-5zM1.500 3.500v9h9l2-1M10.500 2v9" fill="#fff" stroke="#000" />
            <path d="M13 3l7 8M20 2l-7 9" stroke="#900" strokeWidth="1.800" />
          </svg>
        </StatusBar>
      </Window>
    </Page>
  );
}
